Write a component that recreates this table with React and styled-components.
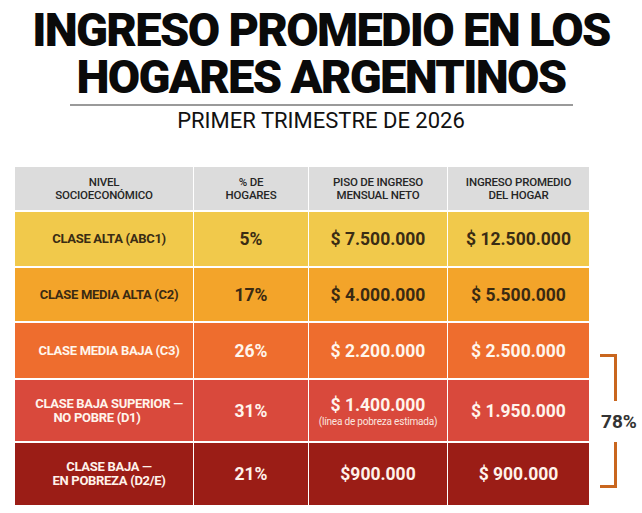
import styled, { createGlobalStyle } from "styled-components";

const rows = [
    { label: ["CLASE ALTA (ABC1)"], pct: "5%", floor: "$ 7.500.000", avg: "$ 12.500.000", bg: "#f1c94b", ink: "#3a2c14" },
    { label: ["CLASE MEDIA ALTA (C2)"], pct: "17%", floor: "$ 4.000.000", avg: "$ 5.500.000", bg: "#f3a42a", ink: "#3a2a12" },
    { label: ["CLASE MEDIA BAJA (C3)"], pct: "26%", floor: "$ 2.200.000", avg: "$ 2.500.000", bg: "#ee6d2e", ink: "#fff6ec" },
    { label: ["CLASE BAJA SUPERIOR —", "NO POBRE (D1)"], pct: "31%", floor: "$ 1.400.000", note: "(línea de pobreza estimada)", avg: "$ 1.950.000", bg: "#d9493c", ink: "#fff4ec", shift: true },
    { label: ["CLASE BAJA —", "EN POBREZA (D2/E)"], pct: "21%", floor: "$900.000", avg: "$ 900.000", bg: "#9b1d16", ink: "#fff2ea" },
];

const heads = [
    ["NIVEL", "SOCIOECONÓMICO"],
    ["% DE", "HOGARES"],
    ["PISO DE INGRESO", "MENSUAL NETO"],
    ["INGRESO PROMEDIO", "DEL HOGAR"],
];

export default function App() {
    return (
        <>
            <GlobalStyle />
            <Page>
                <Title>
                    INGRESO PROMEDIO EN LOS<br />HOGARES ARGENTINOS
                </Title>
                <Rule />
                <Subtitle>PRIMER TRIMESTRE DE 2026</Subtitle>

                <Body>
                    <Table>
                        {heads.map(h => (
                            <Cell key={h[0]} $bg="#dcdcdc" $ink="#262626">
                                {h.map(line => <HeadText key={line}>{line}</HeadText>)}
                            </Cell>
                        ))}
                        {rows.map(r => (
                            <Row key={r.pct} r={r} />
                        ))}
                    </Table>

                    <Aside>
                        <Arm $top />
                        <Share>78%</Share>
                        <Arm />
                    </Aside>
                </Body>
            </Page>
        </>
    );
}

function Row({ r }) {
    return (
        <>
            <Cell $bg={r.bg} $ink={r.ink} $offset>
                {r.label.map((line, i) => (
                    <Label key={line} $shift={r.shift && i === 1}>{line}</Label>
                ))}
            </Cell>
            <Cell $bg={r.bg} $ink={r.ink}>
                <Value>{r.pct}</Value>
            </Cell>
            <Cell $bg={r.bg} $ink={r.ink}>
                <Value>{r.floor}</Value>
                {r.note ? <Note>{r.note}</Note> : null}
            </Cell>
            <Cell $bg={r.bg} $ink={r.ink}>
                <Value>{r.avg}</Value>
            </Cell>
        </>
    );
}

const GlobalStyle = createGlobalStyle`
    * {
        box-sizing: border-box;
    }
    body {
        margin: 0;
        background: #ffffff;
        font-family: Roboto, "Liberation Sans", sans-serif;
    }
`;

const Page = styled.div`
    width: 642px;
    height: 513px;
    padding-top: 6px;
    display: flex;
    flex-direction: column;
    align-items: center;
    overflow: hidden;
`;

const Title = styled.h1`
    margin: 0;
    text-align: center;
    font-size: 47px;
    line-height: 47px;
    font-weight: 900;
    letter-spacing: -1.7px;
    color: #0a0a0a;
    white-space: nowrap;
`;

const Rule = styled.div`
    width: 503px;
    height: 2px;
    margin-top: 4px;
    background-color: #9a9a9a;
`;

const Subtitle = styled.h2`
    margin: 3px 0 0;
    font-size: 22px;
    line-height: 24px;
    font-weight: 400;
    letter-spacing: 0;
    color: #111111;
`;

const Body = styled.div`
    align-self: stretch;
    margin-top: 34px;
    padding-left: 15px;
    display: flex;
    align-items: flex-start;
`;

const Table = styled.div`
    display: grid;
    grid-template-columns: 178px 114px 138px 141px;
    grid-template-rows: 43px 54px 53px 55px 61px 62px;
    column-gap: 1px;
    row-gap: 2px;
    background-color: #ffffff;
`;

const Cell = styled.div`
    display: flex;
    flex-direction: column;
    align-items: center;
    justify-content: center;
    text-align: center;
    background-color: ${props => props.$bg};
    color: ${props => props.$ink};
    padding-left: ${props => props.$offset ? '10px' : '0'};
`;

const HeadText = styled.span`
    font-size: 11.5px;
    line-height: 13px;
    font-weight: 500;
    letter-spacing: -0.2px;
`;

const Label = styled.span`
    font-size: 13px;
    line-height: 14px;
    font-weight: 700;
    letter-spacing: -0.3px;
    white-space: nowrap;
    margin-right: ${props => props.$shift ? '24px' : '0'};
`;

const Value = styled.span`
    font-size: 17.5px;
    line-height: 22px;
    font-weight: 700;
`;

const Note = styled.span`
    font-size: 10px;
    line-height: 12px;
    font-weight: 400;
    letter-spacing: -0.2px;
    opacity: 0.92;
`;

const Aside = styled.div`
    margin-left: 11px;
    padding-top: 187px;
    display: flex;
    flex-direction: column;
`;

const Arm = styled.div`
    width: 17px;
    height: ${props => props.$top ? '47px' : '46px'};
    border-right: 3px solid #c9661e;
    border-top: ${props => props.$top ? '3px solid #c9661e' : 'none'};
    border-bottom: ${props => props.$top ? 'none' : '3px solid #c9661e'};
`;

const Share = styled.div`
    height: 41px;
    display: flex;
    align-items: center;
    padding-left: 1px;
    font-size: 19px;
    font-weight: 700;
    color: #333333;
`;
